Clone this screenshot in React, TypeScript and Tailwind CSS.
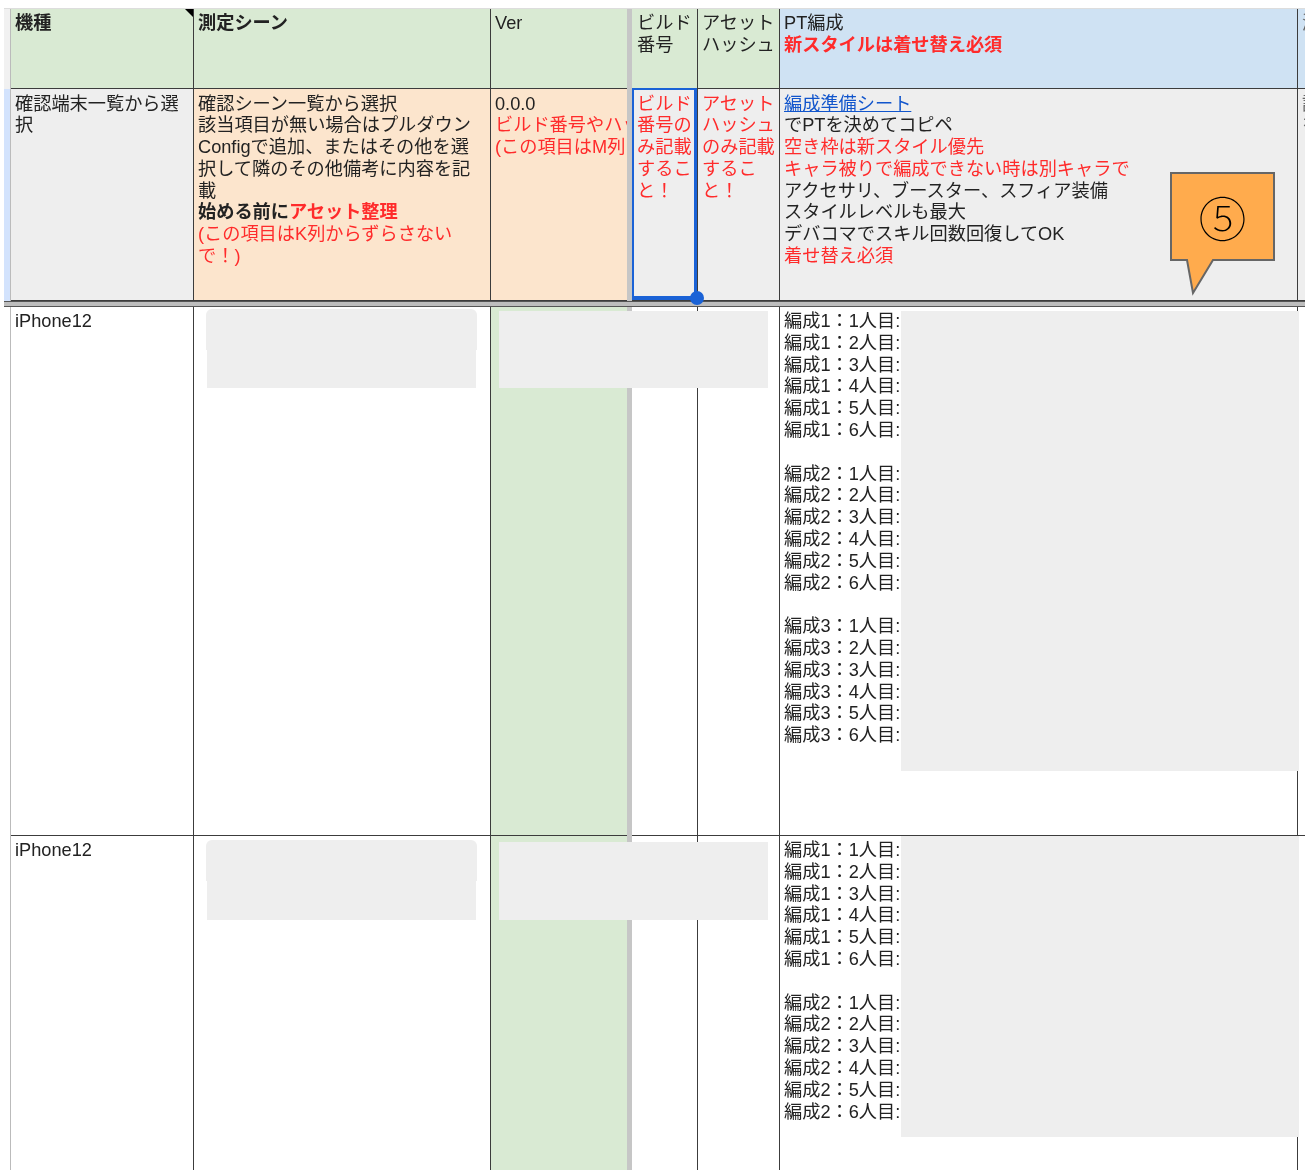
const red = "text-[#ff2b2b]";

function Cell({ className = "", children }: { className?: string; children?: React.ReactNode }) {
  return (
    <div className={`overflow-hidden border-r border-b border-[#3c3c3c] pl-[4px] ${className}`}>
      {children}
    </div>
  );
}

// 編成N：M人目: の行
function Party({ n }: { n: number }) {
  return (
    <>
      {[1, 2, 3, 4, 5, 6].map((m) => (
        <div key={m}>
          編成{n}：{m}人目:
        </div>
      ))}
    </>
  );
}

function Strip({ className = "" }: { className?: string }) {
  return <div className={`border-r border-[#bbb] ${className}`} />;
}

function Bar() {
  return <div className="bg-[#c6c6c6]" />;
}

function Mask({ className = "" }: { className?: string }) {
  return <div className={`absolute bg-[#eeeeee] ${className}`} />;
}

export default function App() {
  return (
    <div className="relative h-[1170px] w-[1308px] overflow-hidden bg-white text-[18.2px] leading-[21.8px] text-[#222] blur-[0.3px] font-['Liberation_Sans','Noto_Sans_CJK_JP',sans-serif]">
      <div className="ml-[4px] pt-[8px]">
        <div className="grid h-[1162px] w-[1301px] grid-cols-[7px_183px_297px_136px_5px_66px_82px_518px_7px] grid-rows-[80px_212px_6px_529px_335px] border-t border-[#ddd]">
          {/* ヘッダー */}
          <Strip className="bg-[#f1f1f1]" />
          <Cell className="relative bg-[#d9ead3] pt-[4px] font-bold">
            機種
            <div className="absolute right-0 top-0 h-0 w-0 border-l-[8px] border-t-[8px] border-l-transparent border-t-black" />
          </Cell>
          <Cell className="bg-[#d9ead3] pt-[4px] font-bold">測定シーン</Cell>
          <Cell className="border-r-0 bg-[#d9ead3] pt-[4px]">Ver</Cell>
          <Bar />
          <Cell className="bg-[#d9ead3] pt-[4px] pl-[5px]">
            ビルド
            <br />
            番号
          </Cell>
          <Cell className="bg-[#d9ead3] pt-[4px]">
            アセット
            <br />
            ハッシュ
          </Cell>
          <Cell className="bg-[#cfe2f3] pt-[4px]">
            PT編成
            <div className={`font-bold ${red}`}>新スタイルは着せ替え必須</div>
          </Cell>
          <Cell className="border-r-0 bg-[#cfe2f3] pt-[4px] text-[#666]">
            <div className="whitespace-nowrap">測定</div>
          </Cell>

          {/* 説明行 */}
          <Strip className="bg-[#d3e3fd]" />
          <Cell className="bg-[#eeeeee] pt-[4.5px]">確認端末一覧から選択</Cell>
          <Cell className="bg-[#fce5cd] pt-[4.5px]">
            確認シーン一覧から選択
            <br />
            該当項目が無い場合はプルダウン
            <br />
            Configで追加、またはその他を選
            <br />
            択して隣のその他備考に内容を記
            <br />
            載
            <br />
            <b>
              始める前に<span className={red}>アセット整理</span>
            </b>
            <div className={red}>
              (この項目はK列からずらさない
              <br />
              で！)
            </div>
          </Cell>
          <Cell className="border-r-0 bg-[#fce5cd] pt-[4.5px]">
            0.0.0
            <div className={`whitespace-nowrap ${red}`}>ビルド番号やハッシュ</div>
            <div className={`whitespace-nowrap ${red}`}>(この項目はM列</div>
          </Cell>
          <Bar />
          <Cell className={`bg-[#eeeeee] pt-[4.5px] pl-[5px] ${red}`}>
            ビルド
            <br />
            番号の
            <br />
            み記載
            <br />
            するこ
            <br />
            と！
          </Cell>
          <Cell className={`bg-[#eeeeee] pt-[4.5px] ${red}`}>
            アセット
            <br />
            ハッシュ
            <br />
            のみ記載
            <br />
            するこ
            <br />
            と！
          </Cell>
          <Cell className="bg-[#eeeeee] pt-[4.5px]">
            <span className="text-[#1155cc] underline">編成準備シート</span>
            <div>でPTを決めてコピペ</div>
            <div className={red}>空き枠は新スタイル優先</div>
            <div className={red}>キャラ被りで編成できない時は別キャラで</div>
            <div>アクセサリ、ブースター、スフィア装備</div>
            <div>スタイルレベルも最大</div>
            <div>デバコマでスキル回数回復してOK</div>
            <div className={red}>着せ替え必須</div>
          </Cell>
          <Cell className="border-r-0 bg-[#eeeeee] pt-[4.5px] text-[#666]">
            <div className="whitespace-nowrap">記載</div>
            <div className="whitespace-nowrap">を</div>
          </Cell>

          {/* 固定行の境界 */}
          <div className="col-span-9 border-y border-[#555] bg-[#bdbdbd]" />

          {/* データ行 */}
          <Strip />
          <Cell className="pt-[4px]">iPhone12</Cell>
          <Cell />
          <Cell className="border-r-0 bg-[#d9ead3]" />
          <Bar />
          <Cell />
          <Cell />
          <Cell className="pt-[4px]">
            <Party n={1} />
            <br />
            <Party n={2} />
            <br />
            <Party n={3} />
          </Cell>
          <div className="border-b border-[#3c3c3c]" />

          <Strip />
          <Cell className="pt-[4px]">iPhone12</Cell>
          <Cell />
          <Cell className="border-r-0 bg-[#d9ead3]" />
          <Bar />
          <Cell />
          <Cell />
          <Cell className="pt-[4px]">
            <Party n={1} />
            <br />
            <Party n={2} />
          </Cell>
          <div />
        </div>
      </div>

      {/* 隠し部分 */}
      <Mask className="left-[206px] top-[309px] h-[41px] w-[271px] rounded-t-[6px]" />
      <Mask className="left-[207px] top-[330px] h-[58px] w-[269px]" />
      <Mask className="left-[499px] top-[311px] h-[77px] w-[269px]" />
      <Mask className="left-[901px] top-[311px] h-[460px] w-[398px]" />
      <Mask className="left-[206px] top-[840px] h-[41px] w-[271px] rounded-t-[6px]" />
      <Mask className="left-[207px] top-[860px] h-[60px] w-[269px]" />
      <Mask className="left-[499px] top-[842px] h-[78px] w-[269px]" />
      <Mask className="left-[901px] top-[836px] h-[301px] w-[398px]" />

      {/* 選択セル */}
      <div className="absolute left-[632px] top-[88px] h-[212px] w-[65px] border-2 border-b-[4px] border-r-[3px] border-[#1a62d6]" />
      <div className="absolute left-[690px] top-[291px] h-[14px] w-[14px] rounded-full bg-[#1a62d6]" />

      {/* 吹き出し */}
      <svg className="absolute left-[1165px] top-[168px]" width="116" height="132" viewBox="0 0 116 132">
        <path d="M6 5H109V92H48L28 125L22 92H6Z" fill="#ffab4d" stroke="#666" strokeWidth="2" />
      </svg>
      <div className="absolute left-[1170px] top-[172px] flex h-[88px] w-[105px] items-center justify-center text-[48px] font-thin leading-none text-black font-['Noto_Sans_CJK_JP',sans-serif]">
        ⑤
      </div>
    </div>
  );
}
